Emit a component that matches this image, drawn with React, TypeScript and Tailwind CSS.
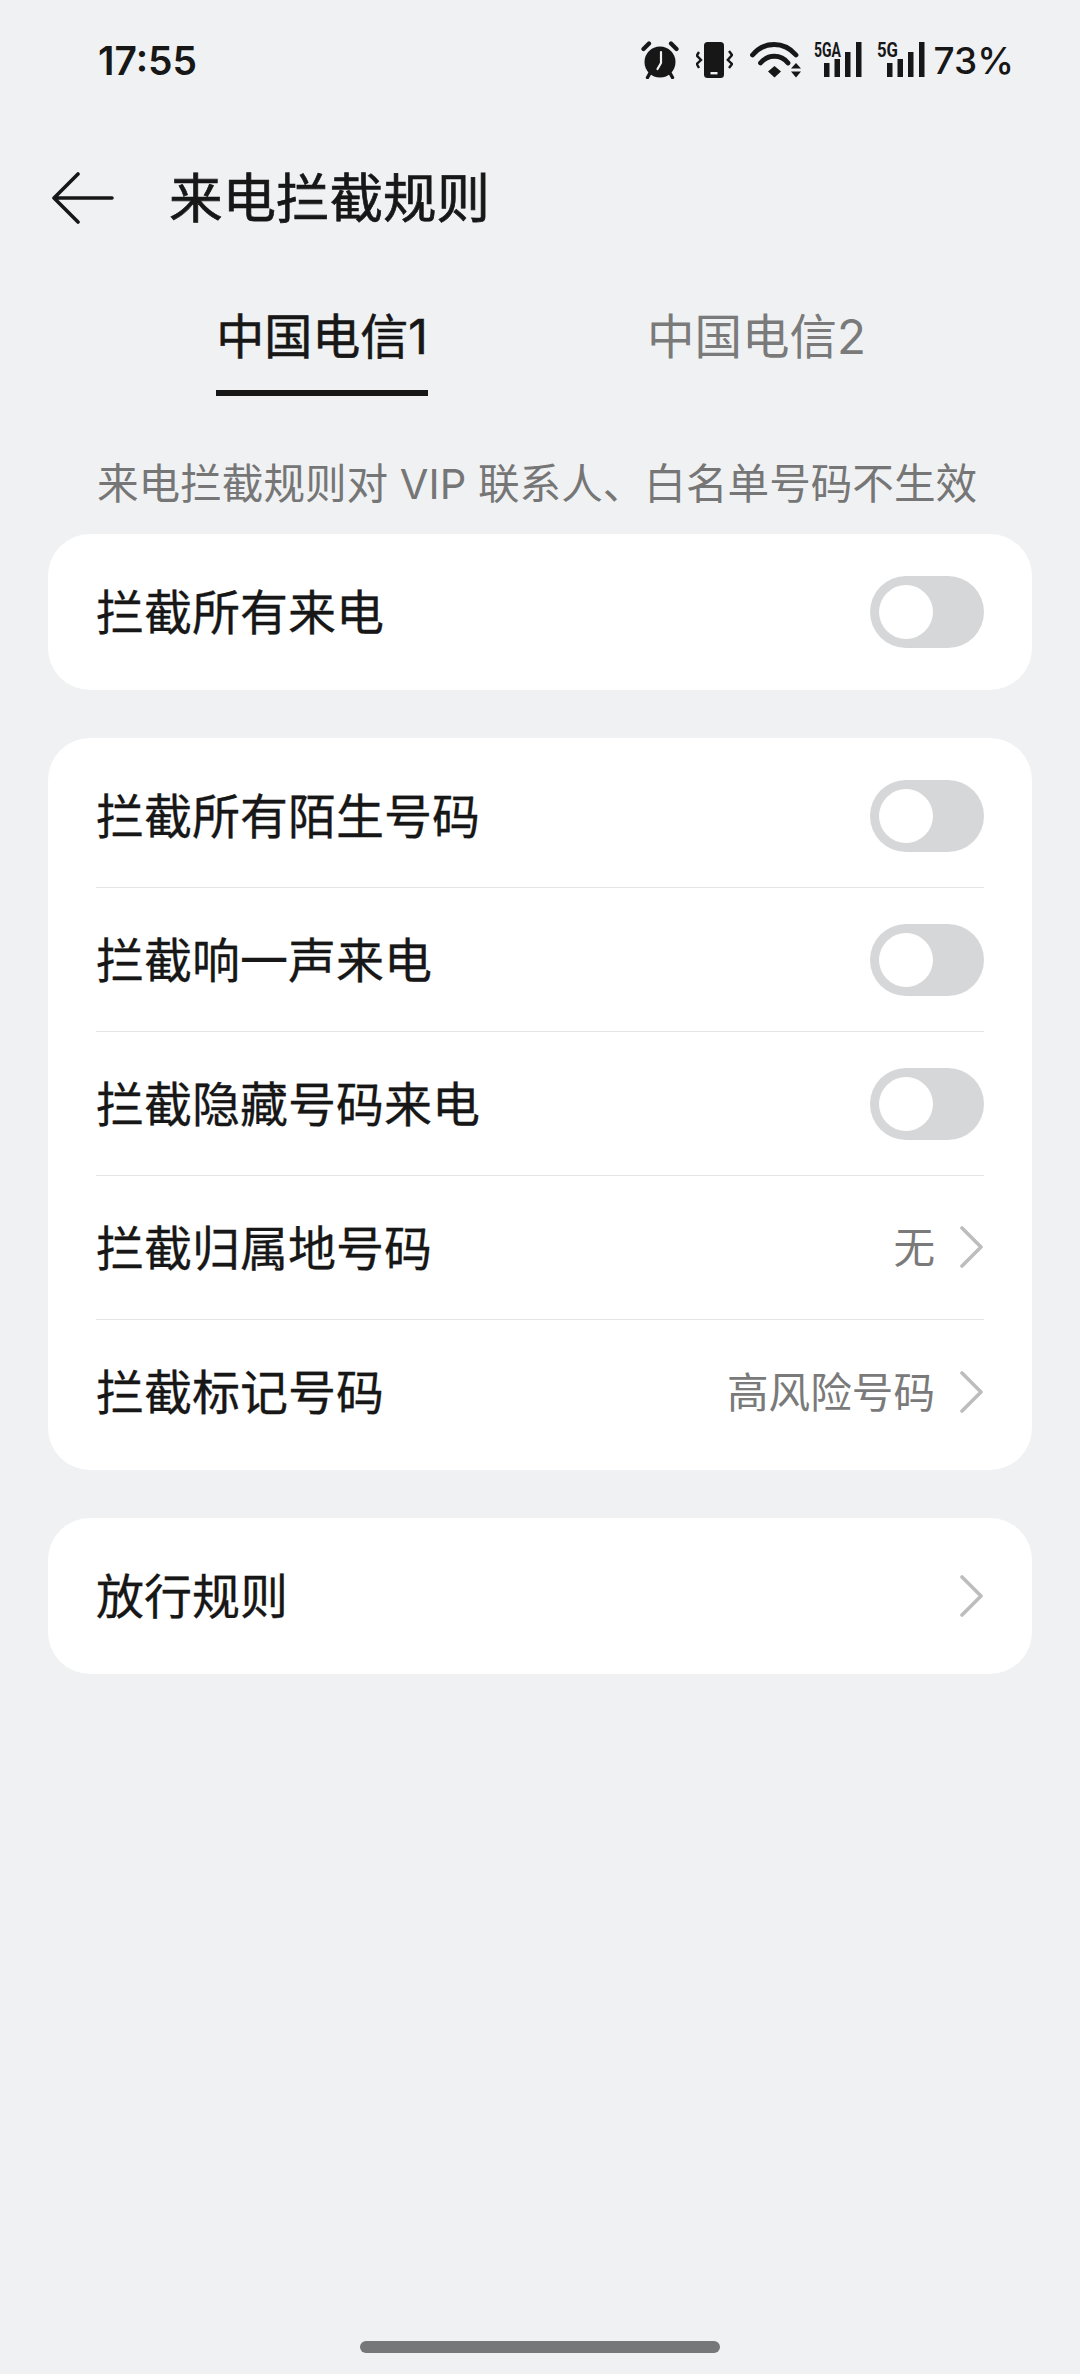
import React from "react";

const Toggle = () => (
  <div className="w-[114px] h-[72px] rounded-full bg-[#d6d7d8] flex items-center pl-[9px]">
    <div className="w-[54px] h-[54px] rounded-full bg-white" />
  </div>
);

const Chevron = () => (
  <svg width="24" height="42" viewBox="0 0 24 42" fill="none">
    <path d="M2 2L21 21L2 40" stroke="#bdbdbd" strokeWidth="3.6" strokeLinecap="round" strokeLinejoin="round" />
  </svg>
);

const Row = ({ label, value, toggle, chevron, last }: { label: string; value?: string; toggle?: boolean; chevron?: boolean; last?: boolean }) => (
  <div className={`h-[144px] flex items-center justify-between mx-12 ${last ? "" : "border-b-[1.5px] border-[#e3e4e6]"}`}>
    <span className="text-[48px] text-[#171717] pt-[2px] [-webkit-text-stroke:0.3px_#171717]">{label}</span>
    <div className="flex items-center">
      {value && <span className="text-[41.6px] text-[#7a7a7a] mr-[25px] pt-[2px]">{value}</span>}
      {toggle && <Toggle />}
      {chevron && <Chevron />}
    </div>
  </div>
);

const Card = ({ children }: { children: React.ReactNode }) => (
  <div className="mx-12 mb-12 bg-white rounded-[42px] py-[6px]">{children}</div>
);

const Signal = ({ label, width, className }: { label: string; width: number; className: string }) => (
  <svg width="48" height="36" viewBox="0 0 48 36" className={`overflow-visible ${className}`}>
    <text x="0" y="15" fontSize="21" fontWeight="700" fill="#171717" fontFamily="Roboto, sans-serif" textLength={width} lengthAdjust="spacingAndGlyphs">
      {label}
    </text>
    <rect x="10" y="21" width="5.5" height="14" fill="#171717" />
    <rect x="20.5" y="17" width="5.5" height="18" fill="#171717" />
    <rect x="31" y="10" width="5.5" height="25" fill="#171717" />
    <rect x="42" y="0" width="5.5" height="35" fill="#171717" />
  </svg>
);

const StatusIcons = () => (
  <div className="flex items-center">
    {/* alarm */}
    <svg width="38" height="38" viewBox="0 0 38 38" className="mr-[17px]">
      <path d="M2.5 8L8 2.5" stroke="#171717" strokeWidth="4.2" strokeLinecap="round" />
      <path d="M35.5 8L30 2.5" stroke="#171717" strokeWidth="4.2" strokeLinecap="round" />
      <path d="M9 32L6.5 36.5M29 32L31.5 36.5" stroke="#171717" strokeWidth="3.4" strokeLinecap="round" />
      <circle cx="19" cy="21" r="15.5" fill="#171717" />
      <path d="M20 11V22L16.5 28" stroke="#f0f1f3" strokeWidth="2.2" fill="none" strokeLinecap="round" strokeLinejoin="round" />
    </svg>
    {/* vibrate */}
    <svg width="37" height="36" viewBox="0 0 37 36" className="mr-[17px]">
      <rect x="8" y="0" width="20" height="36" rx="3.5" fill="#171717" />
      <rect x="14.5" y="30" width="7" height="2.4" fill="#f0f1f3" />
      <path d="M3 10L0.8 13.5L5 18L0.8 22L3 26" stroke="#171717" strokeWidth="2.4" fill="none" />
      <path d="M33 9L36 13L31.8 18L36 22L33 26" stroke="#171717" strokeWidth="2.4" fill="none" />
    </svg>
    {/* wifi */}
    <svg width="52" height="36" viewBox="0 0 52 36" className="mr-[12px]">
      <path d="M2.5 13C14 -1 34 -1 46 13" stroke="#171717" strokeWidth="4.8" fill="none" strokeLinecap="round" />
      <path d="M10.5 21C18 12 31 12 38 21" stroke="#171717" strokeWidth="4.8" fill="none" strokeLinecap="round" />
      <path d="M24.5 24L31 29.5L24.5 35.5L18 29.5Z" fill="#171717" />
      <path d="M46 21L51 26.5H41ZM46 35.5L51 29.5H41Z" fill="#171717" />
    </svg>
    <Signal label="5GA" width={27} className="mr-[15px]" />
    <Signal label="5G" width={21} className="mr-[9px]" />
    <span className="text-[37px] font-medium text-[#171717] leading-none">73%</span>
  </div>
);

export default function App() {
  return (
    <div className="font-['Inter','Noto_Sans_CJK_SC',sans-serif] w-[1080px] h-[2374px] bg-[#f0f1f3] flex flex-col overflow-hidden">
      {/* status bar */}
      <div className="h-[120px] flex items-center justify-between pl-[98px] pr-[66px]">
        <span className="text-[39px] font-semibold text-[#171717] leading-none">17:55</span>
        <StatusIcons />
      </div>

      {/* title bar */}
      <div className="h-[156px] flex items-center pl-[52px]">
        <svg width="62" height="52" viewBox="0 0 62 52" fill="none" className="mr-[55px]">
          <path d="M26 2L2 26L26 50M2 26H60" stroke="#171717" strokeWidth="3.6" strokeLinecap="round" strokeLinejoin="round" />
        </svg>
        <h1 className="text-[53.5px] text-[#171717] pt-[2px] [-webkit-text-stroke:0.7px_#171717]">来电拦截规则</h1>
      </div>

      {/* tabs */}
      <div className="flex h-[120px] pl-[216px]">
        <div className="w-[212px] h-[120px] border-b-[6px] border-[#171717] pt-[31px] flex justify-center">
          <span className="text-[48px] text-[#171717] leading-[60px] whitespace-nowrap [-webkit-text-stroke:0.6px_#171717]">中国电信1</span>
        </div>
        <div className="ml-[219px] pt-[31px]">
          <span className="text-[47.5px] text-[#7a7a7a] leading-[60px] whitespace-nowrap">中国电信2</span>
        </div>
      </div>

      <p className="h-[138px] pl-[97px] pt-[38px] flex items-center text-[41.6px] text-[#767676]">来电拦截规则对 VIP 联系人、白名单号码不生效</p>

      <Card>
        <Row label="拦截所有来电" toggle last />
      </Card>
      <Card>
        <Row label="拦截所有陌生号码" toggle />
        <Row label="拦截响一声来电" toggle />
        <Row label="拦截隐藏号码来电" toggle />
        <Row label="拦截归属地号码" value="无" chevron />
        <Row label="拦截标记号码" value="高风险号码" chevron last />
      </Card>
      <Card>
        <Row label="放行规则" chevron last />
      </Card>

      <div className="mt-auto mb-[21px] mx-auto w-[360px] h-[12px] rounded-full bg-[#767778]" />
    </div>
  );
}
